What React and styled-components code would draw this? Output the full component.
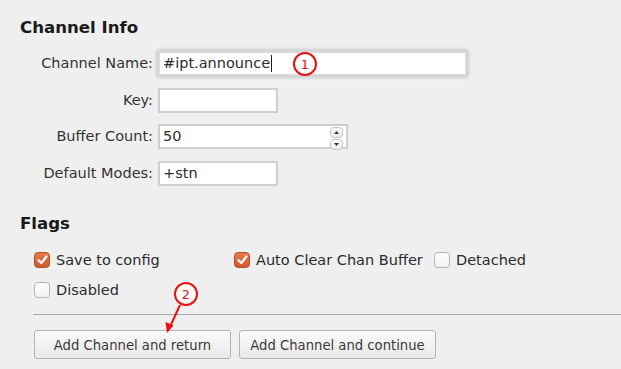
import React from 'react'
import styled, { createGlobalStyle } from 'styled-components'

const GlobalStyle = createGlobalStyle`
    html, body {
        margin: 0;
        padding: 0;
        background: #efefef;
    }

    body {
        font-family: 'DejaVu Sans', 'Liberation Sans', sans-serif;
        font-size: 14.5px;
        color: #3c3c3c;
    }
`

const Page = styled.div`
    position: relative;
    width: 621px;
    height: 369px;
    padding: 18px 0 0 20px;
    box-sizing: border-box;
    overflow: hidden;
`

const SectionTitle = styled.h2`
    margin: ${props => props.$top || 0}px 0 0;
    font-size: 16.6px;
    line-height: 20px;
    font-weight: bold;
    color: #1a1a1a;
`

const FormGrid = styled.div`
    display: grid;
    grid-template-columns: 133px auto;
    column-gap: 5px;
    row-gap: 11.7px;
    margin-top: 13px;
    align-items: center;
    justify-items: start;
`

const Label = styled.label`
    justify-self: end;
    line-height: 25px;
    color: #333;
`

const TextBox = styled.div`
    position: relative;
    box-sizing: border-box;
    width: ${props => props.$width}px;
    height: 25px;
    padding: 0 3px;
    border: 2px solid ${props => (props.$focused ? '#dadada' : '#cfcfcf')};
    background: #fff;
    line-height: 21px;
    color: #2b2b2b;
    box-shadow: ${props => (props.$focused ? '0 0 4px 1px rgba(0, 0, 0, 0.22)' : 'none')};
`

const Caret = styled.span`
    display: inline-block;
    width: 1px;
    height: 17px;
    margin-left: 1px;
    vertical-align: -4px;
    background: #222;
`

const Spinner = styled.div`
    position: absolute;
    top: 1px;
    right: 3px;
    display: flex;
    flex-direction: column;
    gap: 1px;
`

const SpinButton = styled.div`
    display: flex;
    align-items: center;
    justify-content: center;
    width: 11px;
    height: 9px;
    border: 1px solid #c4c4c4;
    border-radius: 4px;
    background: linear-gradient(#ffffff, #ececec);
`

const Marker = styled.span`
    position: absolute;
    display: flex;
    align-items: center;
    justify-content: center;
    width: 20px;
    height: 20px;
    border: 2px solid #e8100f;
    border-radius: 50%;
    background: #fff;
    color: #e8100f;
    font-size: 13px;
    line-height: 1;
`

const FlagList = styled.div`
    display: flex;
    flex-wrap: wrap;
    width: 587px;
    row-gap: 13px;
    margin: 17px 0 0 14px;
`

const Flag = styled.label`
    display: flex;
    align-items: center;
    gap: 6px;
    min-width: ${props => (props.$wide ? '200px' : 'auto')};
    height: 17px;
    color: #2b2b2b;
`

const Box = styled.span`
    display: flex;
    align-items: center;
    justify-content: center;
    box-sizing: border-box;
    width: 16px;
    height: 16px;
    border-radius: 4px;
    border: 1px solid ${props => (props.$checked ? '#b2502a' : '#b4b4b4')};
    background: ${props =>
        props.$checked
            ? 'linear-gradient(#e57a4b, #cf5a2b)'
            : 'linear-gradient(#ffffff, #f2f2f2)'};
`

const Separator = styled.hr`
    margin: 16px 0 0 13px;
    border: none;
    border-top: 1px solid #a9a9a9;
`

const ButtonRow = styled.div`
    display: flex;
    gap: 8px;
    margin: 15px 0 0 14px;
`

const Button = styled.button`
    width: 197px;
    height: 29px;
    padding: 2px 0 0;
    border: 1px solid #b2b2b2;
    border-radius: 3px;
    background: linear-gradient(#fafafa, #e9e9e9);
    font-family: 'DejaVu Sans', sans-serif;
    font-size: 13.2px;
    color: #3a3a3a;
`

const Overlay = styled.svg`
    position: absolute;
    left: 0;
    top: 0;
    pointer-events: none;
`

const Check = () => (
    <svg width="11" height="10" viewBox="0 0 11 10">
        <path d="M1.5 5.2 L4.3 8 L9.5 1.5" fill="none" stroke="#fff" strokeWidth="2.2" strokeLinecap="round" strokeLinejoin="round" />
    </svg>
)

const Tri = ({ up }) => (
    <svg width="5" height="3" viewBox="0 0 5 3">
        <path d={up ? 'M0 3 L2.5 0 L5 3 Z' : 'M0 0 L2.5 3 L5 0 Z'} fill="#333" />
    </svg>
)

const CheckItem = ({ checked, wide, children }) => (
    <Flag $wide={wide}>
        <Box $checked={checked}>{checked && <Check />}</Box>
        {children}
    </Flag>
)

const App = () => (
    <Page>
        <GlobalStyle />
        <SectionTitle>Channel Info</SectionTitle>
        <FormGrid>
            <Label>Channel Name:</Label>
            <TextBox $width={309} $focused>
                #ipt.announce<Caret />
                <Marker style={{ left: 133, top: -1 }}>1</Marker>
            </TextBox>

            <Label>Key:</Label>
            <TextBox $width={120} />

            <Label>Buffer Count:</Label>
            <TextBox $width={190}>
                50
                <Spinner>
                    <SpinButton><Tri up /></SpinButton>
                    <SpinButton><Tri /></SpinButton>
                </Spinner>
            </TextBox>

            <Label>Default Modes:</Label>
            <TextBox $width={120}>+stn</TextBox>
        </FormGrid>

        <SectionTitle $top={28}>Flags</SectionTitle>
        <FlagList>
            <CheckItem checked wide>Save to config</CheckItem>
            <CheckItem checked wide>Auto Clear Chan Buffer</CheckItem>
            <CheckItem>Detached</CheckItem>
            <CheckItem wide>Disabled</CheckItem>
        </FlagList>

        <Separator />
        <ButtonRow>
            <Button>Add Channel and return</Button>
            <Button>Add Channel and continue</Button>
        </ButtonRow>

        <Overlay width="621" height="369">
            <circle cx="186" cy="294" r="11" fill="#fff" stroke="#e8100f" strokeWidth="2" />
            <text x="186" y="298.5" fontSize="13" fill="#e8100f" textAnchor="middle" fontFamily="DejaVu Sans, sans-serif">2</text>
            <line x1="180" y1="305" x2="169" y2="329" stroke="#e8100f" strokeWidth="2" />
            <path d="M167 333 L165.5 322 L173.5 325.5 Z" fill="#e8100f" />
        </Overlay>
    </Page>
)

export default App
